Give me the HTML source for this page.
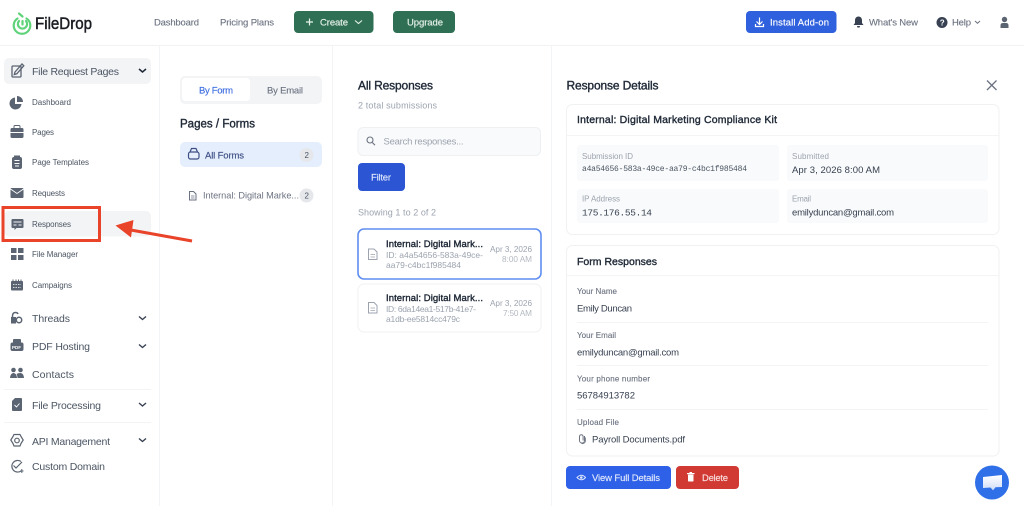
<!DOCTYPE html>
<html><head><meta charset="utf-8"><style>
html,body{margin:0;padding:0;background:#fff;width:1024px;height:506px;overflow:hidden}
svg{display:block;font-family:"Liberation Sans",sans-serif}
text{white-space:pre}
.bb{font-weight:700}
.b{stroke:#1f2937;stroke-width:.38}
.n{fill:#6b7280;stroke:#6b7280;stroke-width:.12}.d{fill:#1f2937}.g{fill:#9ca3af}.m{fill:#4b5563}.w{fill:#fff}
.md{stroke:currentColor;stroke-width:.15}
</style></head><body>
<svg width="1024" height="506" viewBox="0 0 1024 506" xmlns="http://www.w3.org/2000/svg">
<defs><linearGradient id="cg" x1="0" y1="0" x2="0" y2="1"><stop offset="0" stop-color="#fff"/><stop offset="1" stop-color="#cfdcf8"/></linearGradient></defs>
<!-- structure -->
<rect x="0" y="45" width="1024" height="1" fill="#f1f2f4"/>
<rect x="159" y="46" width="1" height="460" fill="#f3f4f6"/>
<rect x="332" y="46" width="1" height="460" fill="#f3f4f6"/>
<rect x="551" y="46" width="1" height="460" fill="#f3f4f6"/>

<!-- logo -->
<g fill="none" stroke="#5fd37a" stroke-width="2.200" stroke-linecap="round">
<path d="M17.500 18.500A8.300 8.300 0 1 0 26.500 18.500"/>
<path d="M19 13.500L22.500 16.500"/>
<path d="M19 21A4.600 4.600 0 1 0 26 21"/>
<path d="M22.500 21v3.500"/>
</g>
<text x="35" y="29" font-size="17" fill="#1a1d23" stroke="#1a1d23" stroke-width=".5" textLength="57" lengthAdjust="spacingAndGlyphs">FileDrop</text>

<!-- top nav -->
<text x="154" y="25.500" font-size="9.500" class="n" textLength="45">Dashboard</text>
<text x="220" y="25.500" font-size="9.500" class="n" textLength="54">Pricing Plans</text>
<rect x="294" y="11" width="79.500" height="22" rx="4" fill="#2f6f53"/>
<path d="M306 22h7M309.500 18.500v7" stroke="#e8f3ec" stroke-width="1.200"/>
<text x="320" y="25.500" font-size="9.500" fill="#e8f3ec" class="md" style="color:#e8f3ec" textLength="28">Create</text>
<path d="M355 20.500l3.500 3 3.500-3" fill="none" stroke="#e8f3ec" stroke-width="1.100"/>
<rect x="393" y="11" width="62" height="22" rx="4" fill="#2f6f53"/>
<text x="407" y="25.500" font-size="9.500" fill="#e8f3ec" class="md" style="color:#e8f3ec" textLength="36">Upgrade</text>
<rect x="746" y="11" width="90.500" height="22" rx="4" fill="#2f60dd"/>
<g fill="none" stroke="#fff" stroke-width="1.200"><path d="M759.500 17.500v7M756.500 21.500l3 3 3-3M755.500 24v2.500h8V24"/></g>
<text x="770" y="25.500" font-size="9.500" fill="#fff" class="md" style="color:#fff" textLength="59">Install Add-on</text>
<path d="M858.500 16.500c-2.500 0-3.500 2-3.500 4v2.500l-1.500 2h10l-1.500-2v-2.500c0-2-1-4-3.500-4z" fill="#374151"/><rect x="857" y="26" width="3" height="1.500" rx=".7" fill="#374151"/>
<text x="869" y="25.500" font-size="9.500" class="n" textLength="49">What's New</text>
<circle cx="942" cy="22.500" r="5.500" fill="#374151"/>
<text x="939.800" y="25.500" font-size="8" class="bb w">?</text>
<text x="952" y="25.500" font-size="9.500" class="n" textLength="19">Help</text>
<path d="M975 21l2.500 2.300 2.500-2.300" fill="none" stroke="#6b7280" stroke-width="1"/>
<circle cx="1004.500" cy="19.500" r="2.700" fill="#5b6472"/><path d="M1000.500 28v-2.500q0-2.500 2.500-2.500h3q2.500 0 2.500 2.500V28z" fill="#5b6472"/>

<!-- sidebar -->
<rect x="4" y="58" width="147" height="26" rx="5" fill="#f3f4f6"/>
<g fill="none" stroke="#5b6472" stroke-width="1.300"><rect x="12" y="66" width="9" height="11" rx="1"/><path d="M15 72l7-8 1.800 1.800-7 8-2.500.7z"/></g>
<text x="32" y="75" font-size="10.500" class="m" textLength="87">File Request Pages</text>
<path d="M139 69l3.500 3 3.500-3" fill="none" stroke="#1f2937" stroke-width="1.500"/>

<path d="M15 97.500a6 6 0 1 0 6.500 6.500h-6.500z" fill="#5b6472"/><path d="M17 96a6 6 0 0 1 6 6h-6z" fill="#5b6472"/>
<text x="32" y="105" font-size="8" class="m" textLength="39">Dashboard</text>
<rect x="10.500" y="128" width="13" height="10" rx="1.500" fill="#5b6472"/><rect x="14" y="125.500" width="6" height="3.500" rx="1" fill="none" stroke="#5b6472"/><rect x="10.500" y="132" width="13" height="1" fill="#fff"/>
<text x="32" y="135" font-size="8" class="m" textLength="22">Pages</text>
<rect x="12" y="157" width="10" height="12" rx="2" fill="#5b6472"/><rect x="14" y="155.500" width="6" height="2" fill="#5b6472"/><path d="M14.500 160.500h5M14.500 163.500h5M15 166h4" stroke="#fff" stroke-width=".9"/>
<text x="32" y="165" font-size="8" class="m" textLength="57">Page Templates</text>
<rect x="10.500" y="188" width="13" height="10" rx="1" fill="#5b6472"/><path d="M10.500 189l6.500 4.500 6.500-4.500" fill="none" stroke="#fff" stroke-width=".9"/>

<text x="32" y="196" font-size="8" class="m" textLength="33">Requests</text>
<rect x="4" y="211" width="147" height="25.500" rx="5" fill="#f3f4f6"/>
<path d="M12.500 219h10a1 1 0 0 1 1 1v7a1 1 0 0 1-1 1h-6l-2 2v-2h-2a1 1 0 0 1-1-1v-7a1 1 0 0 1 1-1z" fill="#5b6472"/><path d="M13.500 222h8M13.500 225h3M18.500 225h3" stroke="#f3f4f6" stroke-width=".9"/>
<text x="32" y="227" font-size="8" class="m" textLength="39">Responses</text>
<rect x="11" y="248" width="5.500" height="5" fill="#5b6472"/><rect x="18" y="248" width="5.500" height="5" fill="#5b6472"/><rect x="11" y="255" width="5.500" height="5" fill="#5b6472"/><rect x="18" y="255" width="5.500" height="5" fill="#5b6472"/>
<text x="32" y="257" font-size="8" class="m" textLength="46">File Manager</text>
<rect x="11" y="281" width="12" height="9.500" rx="1" fill="#5b6472"/><path d="M11 282h12M13 279.500v2M16 279.500v2M18.500 279.500v2M21 279.500v2" stroke="#5b6472" stroke-width="1"/><path d="M13 284.500h8M13 287.500h8" stroke="#fff" stroke-width=".8" stroke-dasharray="1.500 1"/>
<text x="32" y="288" font-size="8" class="m" textLength="40">Campaigns</text>

<path d="M12.500 323v-7q0-3.500 3-3.500 2 0 2.500 1.500" fill="none" stroke="#5b6472" stroke-width="1.500"/><rect x="11" y="317" width="5" height="6.500" fill="#5b6472"/><circle cx="19" cy="320" r="2.700" fill="none" stroke="#5b6472" stroke-width="1.500"/>
<text x="32" y="321.800" font-size="10.500" class="m" textLength="38">Threads</text>
<path d="M139 316.500l3.500 3 3.500-3" fill="none" stroke="#374151" stroke-width="1.400"/>
<rect x="13" y="339" width="8" height="4" rx="1" fill="#5b6472"/><rect x="10.500" y="342.500" width="13" height="8.500" rx="2" fill="#5b6472"/><text x="12" y="349" font-size="4.500" class="bb w">PDF</text>
<text x="32" y="349.800" font-size="10.500" class="m" textLength="58">PDF Hosting</text>
<path d="M139 344.500l3.500 3 3.500-3" fill="none" stroke="#374151" stroke-width="1.400"/>
<circle cx="13.500" cy="370" r="2.300" fill="#5b6472"/><circle cx="20.500" cy="370" r="2.300" fill="#5b6472"/><path d="M10 378q.5-5 3.500-5t3.500 5zM17.500 378q-.2-3-1-4 1.500-1 4-1 3 0 3.500 5z" fill="#5b6472"/>
<text x="32" y="377.800" font-size="10.500" class="m" textLength="42">Contacts</text>
<rect x="4" y="389" width="147" height="1" fill="#f3f4f6"/>
<path d="M15 398h6a1 1 0 0 1 1 1v11a1 1 0 0 1-1 1h-8a1 1 0 0 1-1-1v-9z" fill="#5b6472"/><path d="M14.500 405l2 2 3-3.500" fill="none" stroke="#fff" stroke-width=".9"/>
<text x="32" y="408.800" font-size="10.500" class="m" textLength="69">File Processing</text>
<path d="M139 403l3.500 3 3.500-3" fill="none" stroke="#374151" stroke-width="1.400"/>
<rect x="4" y="422" width="147" height="1" fill="#f3f4f6"/>
<path d="M14 434.500h6l1 2 2.200 3.500-2.200 3.500-1 2.500h-6l-1-2.500-2.200-3.500 2.200-3.500z" fill="none" stroke="#5b6472" stroke-width="1.200" stroke-linejoin="round"/><circle cx="17" cy="440.500" r="2.300" fill="none" stroke="#5b6472" stroke-width="1.200"/>
<text x="32" y="444.800" font-size="10.500" class="m" textLength="78">API Management</text>
<path d="M139 438.500l3.500 3 3.500-3" fill="none" stroke="#374151" stroke-width="1.400"/>
<path d="M21 461.500a5.800 5.800 0 1 0 0 9.500" fill="none" stroke="#5b6472" stroke-width="1.200"/><path d="M13.500 465.500l2.500 2.500 6-6" fill="none" stroke="#5b6472" stroke-width="1.200"/><path d="M20 471h3.500M21.800 469v4" stroke="#5b6472" stroke-width="1"/>
<text x="32" y="469.800" font-size="10.500" class="m" textLength="73">Custom Domain</text>

<!-- highlight -->
<rect x="3" y="207.500" width="96.500" height="33" fill="none" stroke="#e9442a" stroke-width="3"/>
<path d="M192 241L128 229.500" stroke="#e9442a" stroke-width="3"/>
<path d="M115.500 225.500L133.500 220 131 237.500z" fill="#e9442a"/>

<!-- col 2 -->
<rect x="180" y="76" width="142" height="28" rx="5" fill="#f3f4f6"/>
<rect x="182" y="78" width="68" height="23" rx="3.500" fill="#fff"/>
<text x="199" y="93.300" font-size="9.500" fill="#3f6fe0" class="md" style="color:#3f6fe0" textLength="34">By Form</text>
<text x="267" y="93.300" font-size="9.500" class="n" textLength="36">By Email</text>
<text x="180" y="127.300" font-size="11.500" class="b d" textLength="75">Pages / Forms</text>
<rect x="180" y="142" width="142" height="25" rx="5" fill="#e4eefc"/>
<rect x="188.500" y="152" width="10.500" height="7" rx="2" fill="none" stroke="#3f4f86" stroke-width="1.200"/><path d="M190 152l1.500-3.500h4.500l1.500 3.500" fill="none" stroke="#3f4f86" stroke-width="1.200"/>
<text x="205" y="158.300" font-size="9.500" fill="#3f4f86" class="md" style="color:#3f4f86" textLength="39">All Forms</text>
<circle cx="306.500" cy="155" r="7" fill="#e5e7eb"/><text x="304.500" y="158" font-size="8" class="m">2</text>
<path d="M189.500 191.500h4l2.500 2.500v6h-6.500z" fill="none" stroke="#6b7280" stroke-width="1"/><path d="M191 196h3.500M191 198h3.500" stroke="#6b7280" stroke-width=".7"/>
<text x="203" y="198.500" font-size="9.200" fill="#6b7280" textLength="96">Internal: Digital Marke...</text>
<circle cx="306.500" cy="195.500" r="7" fill="#e5e7eb"/><text x="304.500" y="198.500" font-size="8" class="m">2</text>

<!-- col 3 -->
<text x="358" y="89.300" font-size="12" class="b d" textLength="75">All Responses</text>
<text x="358" y="108.300" font-size="9" class="g" textLength="79">2 total submissions</text>
<rect x="358" y="127.500" width="182.500" height="28" rx="5" fill="#f9fafb" stroke="#eef0f2"/>
<circle cx="370" cy="140" r="3" fill="none" stroke="#6b7280" stroke-width="1.100"/><path d="M372.300 142.500l2.700 2.700" stroke="#6b7280" stroke-width="1.100"/>
<text x="383.500" y="144.500" font-size="9.500" class="g" textLength="80">Search responses...</text>
<rect x="358" y="163" width="47" height="28" rx="4" fill="#2b55d3"/>
<text x="371" y="180.500" font-size="9.500" fill="#dfe7fb" class="md" style="color:#dfe7fb" textLength="20">Filter</text>
<text x="358" y="215.500" font-size="9" class="g" textLength="78">Showing 1 to 2 of 2</text>
<rect x="358" y="229" width="183" height="50" rx="6" fill="#fff" stroke="#5f8ef0" stroke-width="1.600"/>
<path d="M368.500 249h5.500l3 3v7.500h-8.500z" fill="none" stroke="#9ca3af" stroke-width="1"/><path d="M370.500 254.500h4.500M370.500 257h4.500" stroke="#9ca3af" stroke-width=".8"/>
<text x="386" y="247" font-size="9.500" class="b d" textLength="97">Internal: Digital Mark...</text>
<text x="386" y="258" font-size="8.500" class="g" textLength="97">ID: a4a54656-583a-49ce-</text>
<text x="386" y="268" font-size="8.500" class="g" textLength="75">aa79-c4bc1f985484</text>
<text x="490" y="252" font-size="8.200" class="g" textLength="42">Apr 3, 2026</text>
<text x="502" y="262" font-size="8.200" fill="#b4b9c1" textLength="30">8:00 AM</text>
<rect x="358" y="284" width="183" height="48" rx="6" fill="#fff" stroke="#f0f1f3"/>
<path d="M368.500 302.500h5.500l3 3v7.500h-8.500z" fill="none" stroke="#9ca3af" stroke-width="1"/><path d="M370.500 308h4.500M370.500 310.500h4.500" stroke="#9ca3af" stroke-width=".8"/>
<text x="386" y="301" font-size="9.500" class="b d" textLength="97">Internal: Digital Mark...</text>
<text x="386" y="312" font-size="8.500" class="g" textLength="90">ID: 6da14ea1-517b-41e7-</text>
<text x="386" y="322" font-size="8.500" class="g" textLength="74">a1db-ee5814cc479c</text>
<text x="490" y="306" font-size="8.200" class="g" textLength="42">Apr 3, 2026</text>
<text x="503" y="316" font-size="8.200" fill="#b4b9c1" textLength="29">7:50 AM</text>

<!-- col 4 -->
<text x="566.500" y="89.300" font-size="12" class="b d" textLength="92">Response Details</text>
<path d="M987 80.500l9.500 9.500M996.500 80.500L987 90" stroke="#6b7280" stroke-width="1.300"/>

<rect x="566.500" y="104.500" width="432.500" height="130" rx="6" fill="#fff" stroke="#f0f1f3"/>
<rect x="567" y="135" width="432" height="1" fill="#f3f4f6"/>
<text x="577" y="123" font-size="10.500" class="b d" textLength="200">Internal: Digital Marketing Compliance Kit</text>
<rect x="577" y="145" width="202" height="36" rx="3" fill="#f9fafb"/>
<rect x="787" y="145" width="201" height="36" rx="3" fill="#f9fafb"/>
<rect x="577" y="189" width="202" height="34" rx="3" fill="#f9fafb"/>
<rect x="787" y="189" width="201" height="34" rx="3" fill="#f9fafb"/>
<text x="582" y="159" font-size="8" class="g" textLength="51">Submission ID</text>
<text x="582" y="171" font-size="8" class="m" style="font-family:'Liberation Mono',monospace" textLength="165">a4a54656-583a-49ce-aa79-c4bc1f985484</text>
<text x="792" y="159" font-size="8" class="g" textLength="37">Submitted</text>
<text x="792" y="173" font-size="9.500" fill="#374151" textLength="88">Apr 3, 2026 8:00 AM</text>
<text x="582" y="201.500" font-size="8" class="g" textLength="38">IP Address</text>
<text x="582" y="215.500" font-size="9.500" style="font-family:'Liberation Mono',monospace" fill="#374151" textLength="70">175.176.55.14</text>
<text x="792" y="201.500" font-size="8" class="g" textLength="19">Email</text>
<text x="792" y="215.500" font-size="9.500" fill="#374151" textLength="102">emilyduncan@gmail.com</text>

<rect x="566.500" y="245.500" width="432.500" height="210.500" rx="6" fill="#fff" stroke="#f0f1f3"/>
<rect x="567" y="275" width="432" height="1" fill="#f3f4f6"/>
<text x="577" y="265" font-size="10.500" class="b d" textLength="80">Form Responses</text>
<text x="577" y="294" font-size="8" class="n" textLength="40">Your Name</text>
<text x="577" y="311.500" font-size="9.500" fill="#374151" textLength="55">Emily Duncan</text>
<rect x="577" y="322" width="411" height="1" fill="#f3f4f6"/>
<text x="577" y="338" font-size="8" class="n" textLength="39">Your Email</text>
<text x="577" y="355.500" font-size="9.500" fill="#374151" textLength="102">emilyduncan@gmail.com</text>
<rect x="577" y="365" width="411" height="1" fill="#f3f4f6"/>
<text x="577" y="381.500" font-size="8" class="n" textLength="73">Your phone number</text>
<text x="577" y="398.500" font-size="9.500" fill="#374151" textLength="58">56784913782</text>
<rect x="577" y="409" width="411" height="1" fill="#f3f4f6"/>
<text x="577" y="425" font-size="8" class="n" textLength="42">Upload File</text>
<path d="M584.500 436v4.500a2.500 2.500 0 0 1-5 0v-4a1.800 1.800 0 0 1 3.600 0v4" fill="none" stroke="#6b7280" stroke-width="1"/>
<path d="M585.500 437.500v3.500a3 3 0 0 1-4 2.500" fill="none" stroke="#6b7280" stroke-width=".8"/>
<text x="592" y="442.500" font-size="9.500" fill="#374151" textLength="93">Payroll Documents.pdf</text>

<rect x="566" y="466" width="105" height="23" rx="4" fill="#2f60e8"/>
<path d="M577 477.500q4.500-4.500 8.500 0q-4 4.500-8.500 0z" fill="none" stroke="#dfe7fb" stroke-width="1"/><circle cx="581.300" cy="477.500" r="1.300" fill="#dfe7fb"/>
<text x="592" y="481" font-size="9.500" fill="#dfe7fb" class="md" style="color:#dfe7fb" textLength="68">View Full Details</text>
<rect x="676" y="466" width="63" height="23" rx="4" fill="#d13a33"/>
<rect x="688" y="474.500" width="5.500" height="7" rx=".6" fill="#fff"/><rect x="687" y="473" width="7.500" height="1.200" fill="#fff"/><rect x="689.500" y="472" width="2.500" height="1" fill="#fff"/>
<text x="702" y="481" font-size="9.500" fill="#f7dcdb" class="md" style="color:#f7dcdb" textLength="26">Delete</text>

<!-- chat -->
<circle cx="992" cy="482.500" r="17" fill="#2f6fe8"/>
<path d="M983 477l19-2v12l-6.500.3-2.500 3-2.500-2.800-7.500.5z" fill="url(#cg)"/>
</svg>
</body></html>
